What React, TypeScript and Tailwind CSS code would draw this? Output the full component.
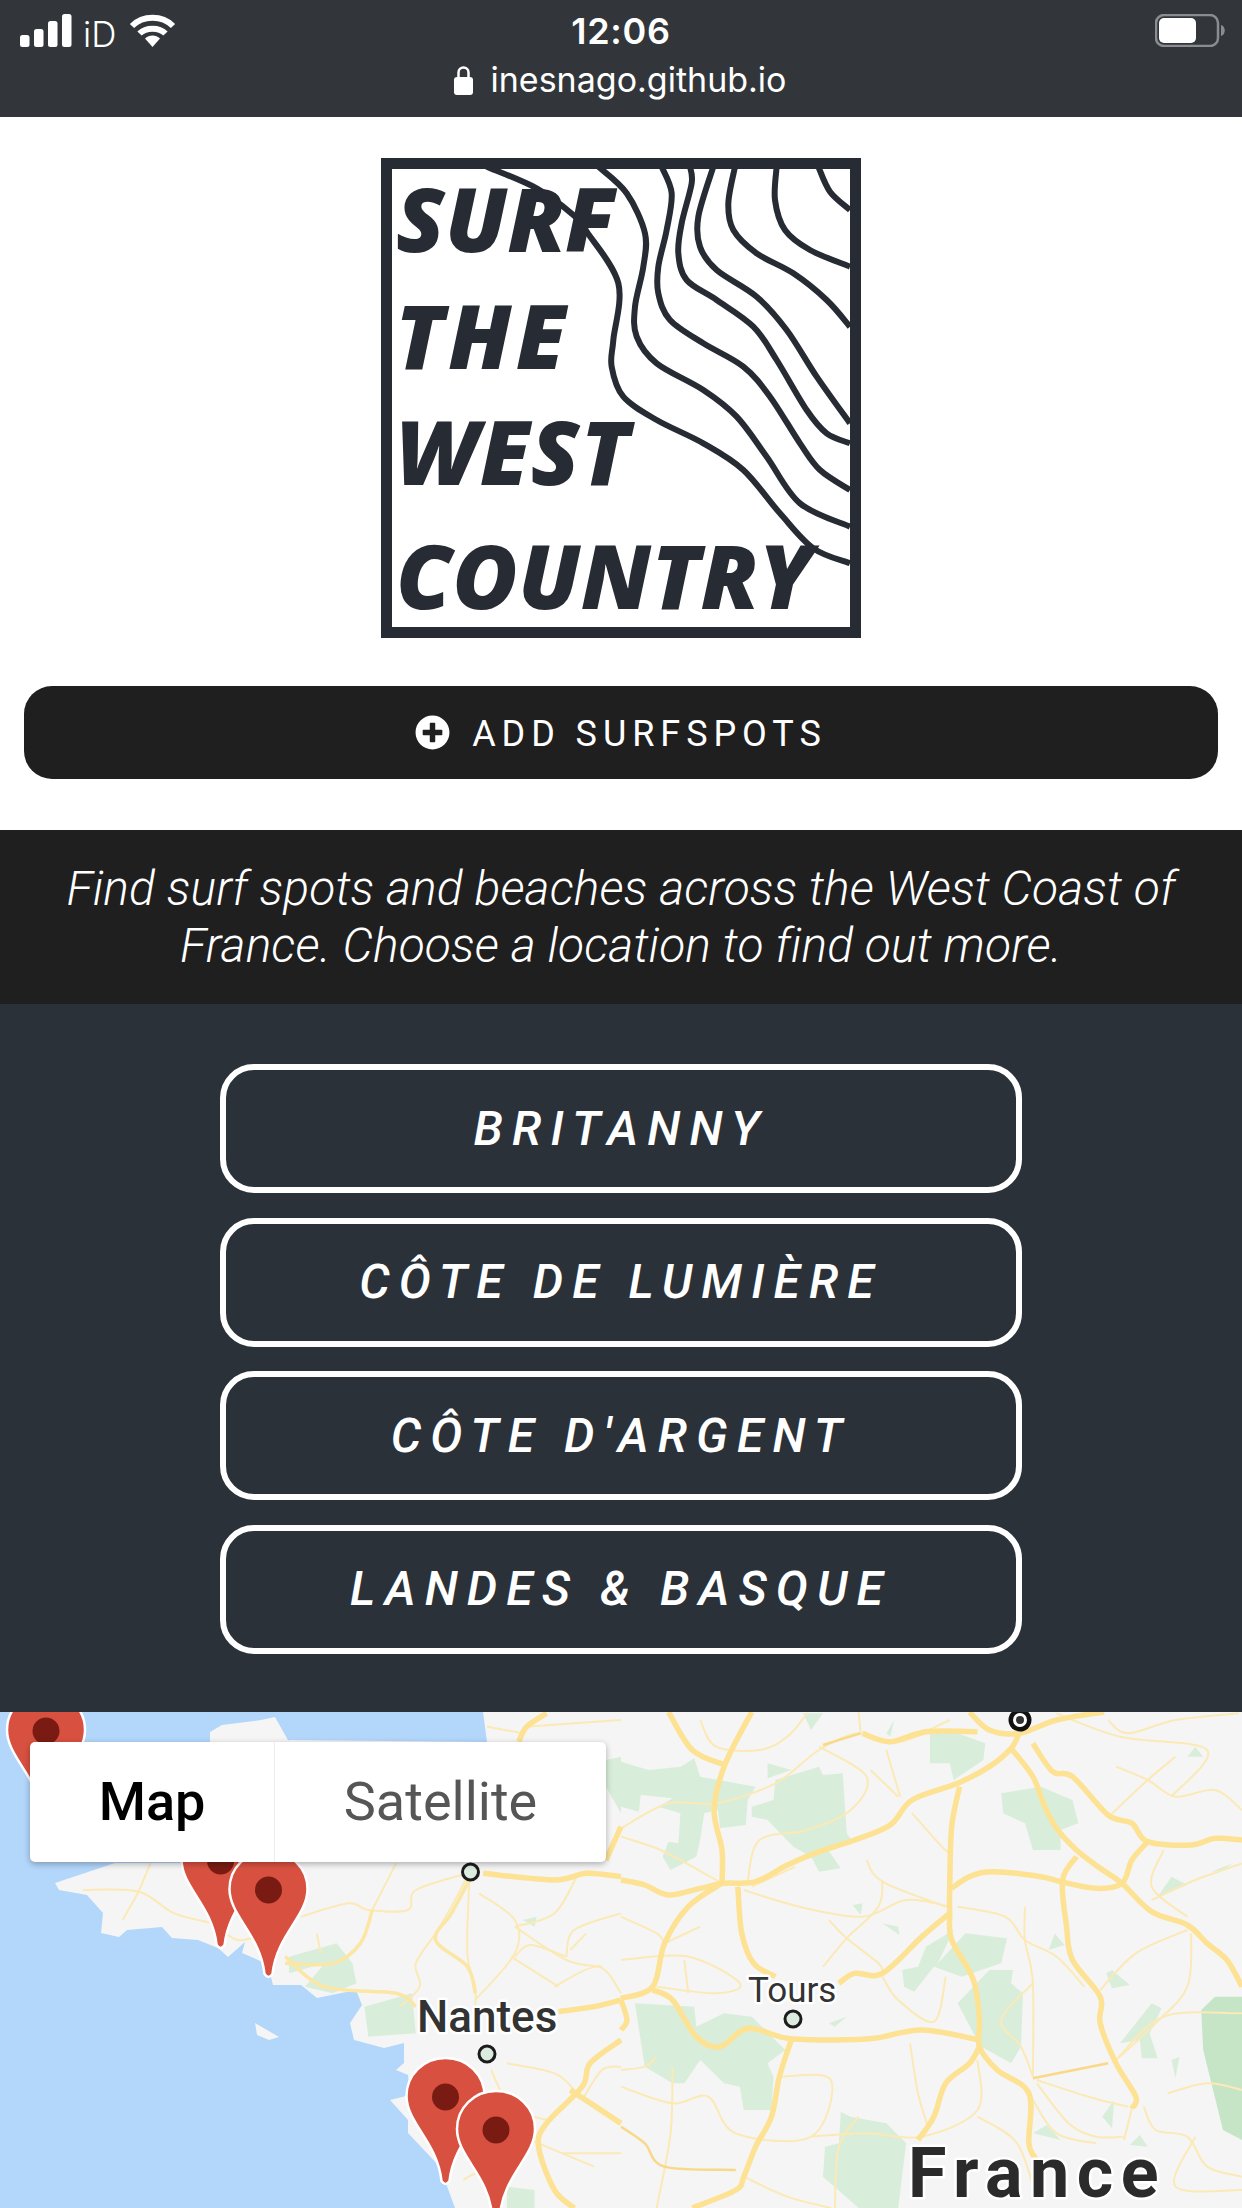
import { FaPlusCircle } from "react-icons/fa";

type Pt = number[];

// catmull-rom through the points, good enough for roads and contour lines
function smooth(pts: Pt[]) {
  let d = `M${pts[0][0]} ${pts[0][1]}`;
  for (let i = 0; i < pts.length - 1; i++) {
    const p0 = pts[i - 1] || pts[i];
    const p1 = pts[i];
    const p2 = pts[i + 1];
    const p3 = pts[i + 2] || p2;
    const c1x = p1[0] + (p2[0] - p0[0]) / 6;
    const c1y = p1[1] + (p2[1] - p0[1]) / 6;
    const c2x = p2[0] - (p3[0] - p1[0]) / 6;
    const c2y = p2[1] - (p3[1] - p1[1]) / 6;
    d += `C${c1x} ${c1y} ${c2x} ${c2y} ${p2[0]} ${p2[1]}`;
  }
  return d;
}

const flat = (pts: Pt[]) => pts.map((p) => p.join(",")).join(" ");

// map data was read off two crops, so it is kept in their coordinates
const left = (pts: Pt[]) => pts.map(([x, y]) => [x / 2.525, 1700 + y / 3]);
const right = (pts: Pt[]) => pts.map(([x, y]) => [621 + x / 2.525, 1700 + y / 3]);

const contours: Pt[][] = [
  [[350, 50], [500, 115], [610, 195], [650, 245], [745, 400], [730, 570], [725, 650], [760, 740], [860, 810], [1000, 880], [1120, 960], [1230, 1090], [1330, 1195], [1440, 1240]],
  [[685, 50], [770, 130], [825, 250], [820, 350], [795, 470], [800, 560], [860, 640], [1000, 720], [1100, 800], [1190, 920], [1290, 1060], [1440, 1130]],
  [[875, 50], [905, 130], [890, 240], [865, 350], [865, 430], [900, 510], [1000, 580], [1120, 650], [1200, 740], [1290, 880], [1350, 960], [1440, 1020]],
  [[960, 50], [965, 100], [935, 220], [925, 310], [950, 390], [1040, 450], [1150, 530], [1220, 630], [1310, 780], [1370, 850], [1440, 880]],
  [[1030, 50], [985, 200], [990, 290], [1040, 360], [1160, 440], [1250, 540], [1340, 680], [1440, 820]],
  [[1095, 50], [1075, 160], [1090, 240], [1160, 310], [1270, 370], [1370, 450], [1440, 530]],
  [[1220, 50], [1215, 150], [1245, 240], [1320, 300], [1440, 350]],
  [[1345, 50], [1380, 125], [1440, 180]],
];

const land: Pt[] = [
  [483, 1712], [487, 1742], [289, 1740], [200, 1863], [115, 1863], [55, 1883], [59, 1890], [87, 1895], [103, 1913], [101, 1933], [119, 1937], [127, 1930], [162, 1927], [172, 1938], [198, 1940], [218, 1948], [228, 1957], [245, 1942], [242, 1953], [265, 1963], [271, 1977], [273, 1985], [301, 1985], [317, 1998], [356, 1990], [362, 2005], [350, 2023], [354, 2040], [384, 2048], [404, 2043], [404, 2063], [396, 2070], [408, 2075], [410, 2095], [390, 2100], [408, 2120], [408, 2133], [440, 2167], [455, 2208], [1242, 2208], [1242, 1712],
];

const islands: Pt[][] = [
  [[210, 1732], [222, 1725], [261, 1720], [275, 1717], [289, 1742], [210, 1742]],
  [[255, 2023], [279, 2037], [269, 2040], [257, 2035]],
];

const forestsLeft: Pt[][] = [
  [[730, 770], [850, 730], [890, 790], [900, 850], [840, 880], [770, 860], [820, 790], [730, 820]],
  [[920, 920], [1040, 880], [1050, 1000], [930, 1010]],
  [[1280, 1460], [1350, 1470], [1350, 1524], [1280, 1524]],
  [[1530, 180], [1568, 170], [1568, 340], [1530, 260]],
  [[1320, 660], [1355, 650], [1350, 680]],
];

const forestsRight: Pt[][] = [
  [[0, 185], [70, 210], [150, 200], [185, 175], [200, 230], [340, 260], [320, 300], [315, 375], [250, 385], [245, 330], [210, 340], [200, 420], [190, 470], [125, 510], [105, 470], [120, 425], [145, 430], [150, 340], [95, 320], [130, 295], [50, 285], [45, 335], [0, 320]],
  [[330, 320], [385, 300], [390, 240], [500, 200], [510, 225], [560, 220], [570, 400], [585, 425], [520, 445], [555, 505], [500, 515], [480, 470], [435, 440], [370, 360], [330, 350]],
  [[370, 190], [430, 210], [370, 235]],
  [[960, 280], [1060, 260], [1140, 300], [1155, 370], [1110, 390], [1110, 450], [1040, 450], [1020, 370], [965, 340]],
  [[780, 100], [850, 100], [920, 130], [915, 180], [840, 240], [830, 190], [780, 190]],
  [[460, 40], [510, 40], [480, 90]],
  [[670, 100], [690, 60], [680, 110]],
  [[710, 810], [750, 800], [770, 740], [840, 690], [800, 790], [870, 700], [975, 715], [960, 790], [860, 830], [790, 800], [740, 875], [715, 860]],
  [[850, 910], [930, 810], [990, 810], [985, 850], [1015, 880], [1010, 1040], [985, 1090], [910, 1040], [890, 1000]],
  [[35, 910], [185, 920], [190, 980], [260, 940], [330, 950], [415, 1050], [370, 1090], [385, 1130], [380, 1230], [310, 1230], [300, 1160], [260, 1150], [200, 1080], [160, 1150], [130, 1150], [60, 1100]],
  [[555, 1235], [580, 1250], [670, 1270], [720, 1330], [700, 1524], [600, 1524], [510, 1430], [515, 1340], [550, 1330]],
  [[1355, 590], [1390, 530], [1430, 555]],
  [[1490, 515], [1545, 490], [1520, 510]],
  [[1430, 170], [1450, 140], [1470, 170]],
  [[1225, 820], [1240, 810], [1285, 855], [1240, 865]],
  [[1080, 750], [1095, 700], [1120, 735]],
  [[1260, 1030], [1340, 910], [1365, 925], [1335, 1000], [1355, 1075], [1315, 1075], [1310, 1020]],
  [[1215, 1250], [1245, 1200], [1240, 1285]],
  [[1390, 1080], [1410, 1070], [1400, 1135]],
  [[1285, 1335], [1310, 1305], [1330, 1340]],
  [[1040, 1300], [1075, 1275], [1110, 1320]],
  [[525, 970], [570, 950], [540, 980]],
  [[585, 615], [610, 610], [605, 645]],
  [[660, 670], [700, 680], [703, 705]],
];

const darkForest: Pt[] = [[1465, 930], [1500, 890], [1568, 890], [1568, 1320], [1520, 1290], [1470, 1050]];

const minorRight: Pt[][] = [
  [[0, 385], [120, 310], [240, 310], [390, 250], [500, 150], [600, 100], [680, 130], [770, 100]],
  [[0, 410], [100, 450], [210, 520], [255, 550]],
  [[310, 570], [450, 620], [610, 650], [720, 600], [830, 620]],
  [[660, 540], [650, 620], [570, 715], [510, 800]],
  [[525, 660], [570, 715], [650, 790], [660, 820]],
  [[620, 480], [660, 545], [820, 620]],
  [[630, 210], [700, 290]],
  [[670, 150], [705, 290]],
  [[735, 340], [810, 440], [830, 460]],
  [[320, 540], [350, 420], [470, 390], [580, 330], [620, 230], [500, 140]],
  [[850, 620], [970, 650], [1020, 720], [1100, 770], [1170, 860]],
  [[1020, 620], [1020, 720], [1040, 850], [1040, 1130]],
  [[1040, 850], [960, 960], [1010, 1040], [1040, 1130]],
  [[1430, 690], [1300, 760], [1210, 870]],
  [[1440, 700], [1430, 860], [1350, 970], [1250, 1080]],
  [[1050, 1140], [1180, 1190], [1280, 1220]],
  [[1050, 1150], [1130, 1270], [1200, 1310], [1270, 1310]],
  [[1290, 1225], [1270, 1320]],
  [[1320, 1220], [1350, 1290], [1430, 1310], [1480, 1400], [1568, 1430]],
  [[0, 1160], [130, 1210], [220, 1190], [290, 1300], [480, 1310], [530, 1140], [400, 1130]],
  [[130, 1100], [125, 1300], [90, 1524]],
  [[600, 1250], [550, 1340], [540, 1524]],
  [[730, 1030], [750, 1180], [775, 1280]],
  [[900, 1080], [900, 1230], [760, 1310], [620, 1300], [480, 1310]],
  [[0, 780], [170, 770], [300, 850], [240, 880], [90, 860]],
  [[160, 780], [170, 880]],
  [[660, 830], [700, 900], [790, 965], [820, 830]],
  [[1568, 940], [1370, 950], [1250, 1080]],
  [[1250, 200], [1330, 240], [1400, 290], [1500, 270], [1568, 330]],
  [[1400, 170], [1330, 240], [1240, 340]],
  [[1100, 40], [1260, 110], [1480, 150], [1390, 290]],
  [[1370, 450], [1340, 560], [1430, 650]],
  [[1568, 490], [1450, 540], [1340, 600]],
  [[1040, 1200], [1100, 1300], [1200, 1330]],
  [[0, 650], [90, 700], [110, 730]],
  [[200, 680], [110, 730]],
  [[440, 500], [330, 560]],
  [[200, 60], [240, 140], [350, 150], [420, 110], [470, 40]],
  [[600, 36], [605, 100]],
  [[830, 60], [760, 100]],
  [[1230, 60], [1280, 100], [1400, 60], [1560, 40]],
  [[0, 1110], [60, 1100], [90, 1070]],
  [[1380, 1180], [1480, 1150], [1568, 1170]],
  [[1450, 1310], [1400, 1460], [1568, 1470]],
  [[900, 1250], [1000, 1330], [1050, 1500]],
  [[310, 1430], [420, 1490], [530, 1524]],
];

const minorLeft: Pt[][] = [
  [[760, 650], [880, 610], [930, 630], [1030, 630], [1050, 570], [1180, 520]],
  [[800, 700], [810, 760]],
  [[1180, 530], [1140, 620], [1100, 700], [1050, 790], [1060, 860], [1010, 920]],
  [[1185, 540], [1180, 760], [1200, 860], [1200, 920]],
  [[1210, 580], [1300, 660], [1300, 760], [1200, 900]],
  [[1300, 680], [1430, 780], [1520, 800]],
  [[1300, 770], [1340, 735], [1430, 770]],
  [[1000, 490], [940, 630]],
  [[1460, 520], [1400, 640], [1300, 680]],
  [[1480, 700], [1440, 750]],
  [[1400, 860], [1510, 800], [1568, 880]],
  [[1410, 860], [1290, 770]],
  [[1568, 640], [1450, 690], [1430, 770]],
  [[1280, 1090], [1400, 1120], [1450, 1170]],
  [[1240, 1110], [1290, 1220], [1380, 1260]],
  [[1340, 1320], [1500, 1400]],
  [[1420, 1360], [1568, 1360]],
  [[210, 570], [350, 575], [440, 640], [540, 670]],
  [[350, 575], [310, 660]],
  [[380, 490], [350, 575]],
  [[540, 670], [600, 720], [670, 700]],
  [[1330, 80], [1568, 60]],
  [[1230, 80], [1320, 100]],
  [[1470, 1200], [1520, 1110], [1568, 1100]],
  [[1170, 1440], [1210, 1420], [1290, 1440]],
];

const midLeft: Pt[][] = [
  [[940, 630], [910, 730], [840, 790], [720, 790]],
  [[720, 770], [820, 860], [1000, 880], [1050, 920]],
  [[1185, 540], [1140, 640], [1100, 720], [1180, 800], [1200, 880]],
];

const majorRight: Pt[][] = [
  [[0, 540], [60, 555], [120, 585], [200, 565], [260, 550], [340, 545], [420, 495], [500, 455], [590, 420], [680, 375], [735, 300], [850, 250], [930, 200], [985, 145], [1005, 100]],
  [[985, 145], [1040, 230], [1070, 320], [1100, 385], [1150, 450], [1210, 505], [1265, 550], [1340, 635], [1430, 675], [1480, 730], [1530, 780], [1568, 860]],
  [[1040, 130], [1090, 215], [1140, 230], [1230, 345], [1290, 370], [1330, 425], [1440, 435], [1500, 415], [1568, 420]],
  [[1330, 425], [1290, 480], [1265, 550], [1200, 565], [1110, 545], [1060, 530], [940, 515], [880, 530], [835, 565]],
  [[855, 260], [835, 380], [830, 560], [830, 640], [835, 720], [890, 840], [905, 960], [905, 1040], [950, 1110], [1030, 1180], [1030, 1330], [1050, 1380]],
  [[830, 640], [760, 710], [660, 820], [590, 820], [550, 850]],
  [[1150, 470], [1115, 540], [1125, 680], [1140, 780], [1210, 890], [1210, 970], [1250, 1090], [1300, 1190], [1290, 1225]],
  [[905, 1040], [880, 1090], [820, 1150], [790, 1250], [750, 1320]],
  [[120, 36], [180, 150], [262, 195]],
  [[330, 36], [262, 195], [235, 330], [255, 450], [255, 550]],
  [[255, 550], [170, 620], [110, 730], [80, 860], [0, 895]],
  [[80, 870], [130, 900], [190, 1010], [250, 1040], [320, 985], [420, 1015], [540, 1020], [640, 1015], [760, 990], [905, 1020]],
  [[295, 560], [305, 700], [335, 790], [390, 830]],
  [[430, 1020], [400, 1130], [380, 1250], [340, 1340], [310, 1430], [290, 1470], [180, 1524]],
  [[0, 900], [15, 960], [0, 990]],
  [[880, 36], [930, 90], [1005, 100], [1100, 60], [1220, 36]],
  [[610, 100], [680, 125], [770, 95], [900, 95]],
];

const majorLeft: Pt[][] = [
  [[1380, 40], [1330, 80], [1310, 125]],
  [[1220, 520], [1400, 540], [1480, 520], [1568, 530]],
  [[1568, 380], [1530, 480]],
  [[1410, 935], [1500, 920], [1568, 900]],
  [[1568, 1020], [1490, 1090], [1470, 1160], [1380, 1270], [1360, 1340], [1400, 1470], [1450, 1524]],
  [[1440, 1170], [1568, 1270]],
];

const goldRight: Pt[][] = [
  [[1230, 1090], [1040, 1135]],
  [[0, 1280], [60, 1330], [110, 1400], [290, 1410]],
  [[510, 135], [605, 100]],
];

function Pin({ x, y }: { x: number; y: number }) {
  return (
    <g transform={`translate(${x} ${y})`}>
      <path
        d="M0 -39C22 -39 39 -22 39 -1C39 26 8 45 4 84Q0 90 -4 84C-8 45 -39 26 -39 -1C-39 -22 -22 -39 0 -39Z"
        fill="#d85140"
        stroke="#ffffff"
        strokeWidth="2.5"
      />
      <circle r="13.5" fill="#7a1b13" />
    </g>
  );
}

function CityDot({ x, y }: { x: number; y: number }) {
  return <circle cx={x} cy={y} r="8" fill="#dcebe0" stroke="#1c1c1c" strokeWidth="3" />;
}

function MapArt() {
  return (
    <svg viewBox="0 1712 1242 496" className="block h-full w-full">
      <rect x="0" y="1712" width="1242" height="496" fill="#b3d6fb" />
      <polygon points={flat(land)} fill="#f5f5f5" />
      {islands.map((p, i) => (
        <polygon key={i} points={flat(p)} fill="#f5f5f5" />
      ))}
      <g fill="#d9eeda">
        {forestsLeft.map((p, i) => (
          <polygon key={i} points={flat(left(p))} />
        ))}
        {forestsRight.map((p, i) => (
          <polygon key={i} points={flat(right(p))} />
        ))}
      </g>
      <polygon points={flat(right(darkForest))} fill="#c6e5c6" />
      <g fill="none" stroke="#fbe9b6" strokeWidth="2">
        {minorRight.map((p, i) => (
          <path key={i} d={smooth(right(p))} />
        ))}
        {minorLeft.map((p, i) => (
          <path key={i} d={smooth(left(p))} />
        ))}
      </g>
      <g fill="none" stroke="#fce6a4" strokeWidth="3.5">
        {midLeft.map((p, i) => (
          <path key={i} d={smooth(left(p))} />
        ))}
      </g>
      <g fill="none" stroke="#f8d987" strokeWidth="2.5">
        {goldRight.map((p, i) => (
          <path key={i} d={smooth(right(p))} />
        ))}
      </g>
      <g fill="none" stroke="#fde293" strokeWidth="5.5" strokeLinejoin="round">
        {majorRight.map((p, i) => (
          <path key={i} d={smooth(right(p))} />
        ))}
        {majorLeft.map((p, i) => (
          <path key={i} d={smooth(left(p))} />
        ))}
      </g>

      <CityDot x={470.5} y={1872} />
      <CityDot x={487} y={2054} />
      <CityDot x={793} y={2019} />
      <circle cx="1020" cy="1720" r="11.5" fill="#111111" />
      <circle cx="1020" cy="1720" r="7" fill="#ffffff" />
      <circle cx="1020" cy="1720" r="4" fill="#333333" />

      <g className="font-[family-name:Roboto]" style={{ paintOrder: "stroke" }} stroke="#ffffff" strokeLinejoin="round">
        <text x="417" y="2032" fontSize="44" fontWeight="500" fill="#333333" strokeWidth="5">Nantes</text>
        <text x="748" y="2002" fontSize="35" fill="#333333" strokeWidth="5">Tours</text>
        <text x="908" y="2197" fontSize="70" fontWeight="700" fill="#2b2b2b" strokeWidth="5" letterSpacing="7.5">France</text>
      </g>

      <Pin x={46} y={1731} />
      <Pin x={220.6} y={1861} />
      <Pin x={268.5} y={1890} />
      <Pin x={445.5} y={2097} />
      <Pin x={496} y={2130} />
    </svg>
  );
}

function Logo() {
  return (
    <svg viewBox="0 0 480 480" className="h-[480px] w-[480px]">
      <rect x="5.5" y="5.5" width="469" height="469" fill="#ffffff" stroke="#272b34" strokeWidth="11" />
      <g transform="translate(-11 -8) scale(0.33333)" fill="none" stroke="#272b34" strokeWidth="18">
        {contours.map((p, i) => (
          <path key={i} d={smooth(p)} />
        ))}
      </g>
      <g className="font-[family-name:'Open_Sans']" fontWeight="800" fontStyle="italic" fontSize="89" fill="#272b34">
        <text x="15" y="94">SURF</text>
        <text x="14" y="211" letterSpacing="4">THE</text>
        <text x="14.500" y="327" letterSpacing="1">WEST</text>
        <text x="15" y="451" letterSpacing="0.2">COUNTRY</text>
      </g>
    </svg>
  );
}

function StatusBar() {
  return (
    <div className="relative h-[117px] bg-[#32363a] text-white font-[family-name:Inter]">
      <div className="flex items-start justify-between pl-5 pr-4 pt-[14px]">
        <div className="flex items-start">
          <svg width="52" height="33" viewBox="0 0 52 33" fill="#ffffff">
            <rect x="0" y="21" width="9.5" height="12" rx="2.5" />
            <rect x="14" y="15" width="9.5" height="18" rx="2.5" />
            <rect x="28" y="7" width="9.5" height="26" rx="2.5" />
            <rect x="42" y="0" width="9.5" height="33" rx="2.5" />
          </svg>
          <span className="ml-[11px] text-[35px] font-light leading-[40px]">iD</span>
          <svg className="ml-[13px]" width="47" height="33" viewBox="0 0 47 33" fill="none" stroke="#ffffff" strokeWidth="6">
            <path d="M3 12C14 1 33 1 44 12" />
            <path d="M10.500 19.500C17 13 30 13 36.500 19.500" />
            <path d="M16 24.500L23.500 33L31 24.500C27 20.500 20 20.500 16 24.500Z" fill="#ffffff" stroke="none" />
          </svg>
        </div>
        <svg width="71" height="33" viewBox="0 0 71 33" fill="none">
          <rect x="1" y="1" width="62" height="31" rx="8" stroke="#8a8d90" strokeWidth="2.500" />
          <rect x="4" y="4" width="37" height="25" rx="5" fill="#ffffff" />
          <path d="M66 11C71 12 71 21 66 22Z" fill="#8a8d90" />
        </svg>
      </div>
      <div className="absolute inset-x-0 top-[11px] text-center text-[36px] font-semibold leading-[40px] tracking-[0.02em]">
        12:06
      </div>
      <div className="absolute inset-x-0 top-[60px] flex items-center justify-center gap-[18px] pr-[2px]">
        <svg width="19" height="30" viewBox="0 0 19 30">
          <path d="M4.500 13V7.500a5 5 0 0 1 10 0V13" fill="none" stroke="#ffffff" strokeWidth="2.500" />
          <rect x="0" y="12" width="19" height="18" rx="3" fill="#ffffff" />
        </svg>
        <span className="text-[34px] font-normal leading-[40px]">inesnago.github.io</span>
      </div>
    </div>
  );
}

const regions = ["BRITANNY", "CÔTE DE LUMIÈRE", "CÔTE D'ARGENT", "LANDES & BASQUE"];

export default function App() {
  return (
    <div className="flex h-[2208px] w-[1242px] flex-col overflow-hidden bg-white font-[family-name:Roboto]">
      <StatusBar />

      <div className="flex flex-col items-center px-6 pt-[41px] pb-[51px]">
        <Logo />
        <a className="mt-[48px] flex h-[93px] w-full items-center justify-center gap-[22px] rounded-[28px] bg-[#1f1f1f] text-[36px] tracking-[0.165em] text-white">
          <FaPlusCircle className="h-[35px] w-[35px]" />
          <span className="pt-[3px]">ADD SURFSPOTS</span>
        </a>
      </div>

      <p className="flex h-[174px] items-center justify-center bg-[#1f1f1f] px-10 text-center text-[48px] font-light italic leading-[57px] tracking-[0.12px] text-white">
        Find surf spots and beaches across the West Coast of France. Choose a location to find out more.
      </p>

      <div className="flex h-[708px] flex-col items-center gap-[24.500px] bg-[#2a3138] pt-[60px]">
        {regions.map((r) => (
          <button
            key={r}
            className="flex h-[129px] w-[802px] items-center justify-center rounded-[34px] border-[6px] border-white text-[48px] font-medium italic tracking-[0.19em] text-white"
          >
            {r}
          </button>
        ))}
      </div>

      <div className="relative h-[496px]">
        <MapArt />
        <div className="absolute left-[30px] top-[30px] flex h-[120px] w-[576px] rounded-[5px] bg-white shadow-[0_2px_6px_rgba(0,0,0,0.3)]">
          <div className="flex w-[245px] items-center justify-center border-r border-[#ececec] pb-[2px] text-[54px] font-medium text-black">
            Map
          </div>
          <div className="flex flex-1 items-center justify-center pb-[2px] text-[54px] text-[#565656]">Satellite</div>
        </div>
      </div>
    </div>
  );
}
